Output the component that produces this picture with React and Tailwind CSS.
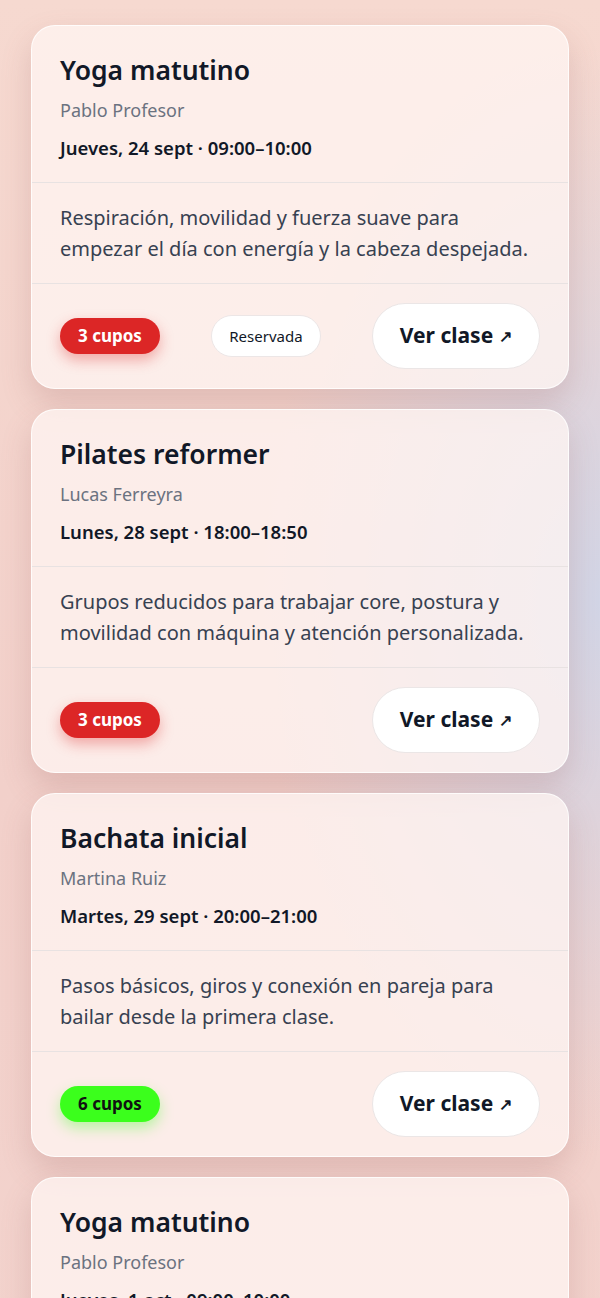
import React from "react";

const classes = [
  {
    title: "Yoga matutino",
    teacher: "Pablo Profesor",
    when: "Jueves, 24 sept · 09:00–10:00",
    desc: "Respiración, movilidad y fuerza suave para empezar el día con energía y la cabeza despejada.",
    cupos: 3,
    reserved: true,
  },
  {
    title: "Pilates reformer",
    teacher: "Lucas Ferreyra",
    when: "Lunes, 28 sept · 18:00–18:50",
    desc: "Grupos reducidos para trabajar core, postura y movilidad con máquina y atención personalizada.",
    cupos: 3,
    reserved: false,
  },
  {
    title: "Bachata inicial",
    teacher: "Martina Ruiz",
    when: "Martes, 29 sept · 20:00–21:00",
    desc: "Pasos básicos, giros y conexión en pareja para bailar desde la primera clase.",
    cupos: 6,
    reserved: false,
  },
  {
    title: "Yoga matutino",
    teacher: "Pablo Profesor",
    when: "Jueves, 1 oct · 09:00–10:00",
    desc: "Respiración, movilidad y fuerza suave para empezar el día con energía y la cabeza despejada.",
    cupos: 3,
    reserved: false,
  },
];

function Card({ c }) {
  const low = c.cupos <= 3;
  return (
    <div className="rounded-[24px] border border-white/80 bg-[#fff6f3]/75 shadow-[0_14px_30px_rgba(150,90,90,0.22)] overflow-hidden">
      <div className="px-[28px] pt-[26px] pb-[22px]">
        <h2 className="text-[26.5px] leading-[36px] font-semibold text-[#111827]">{c.title}</h2>
        <p className="mt-[10px] text-[18px] leading-[24px] text-[#6b7280]">{c.teacher}</p>
        <p className="mt-[14px] text-[18.5px] leading-[24px] font-semibold text-[#111827]">{c.when}</p>
      </div>
      <div className="border-t border-[#e8e2e2] px-[28px] py-[19px]">
        <p className="text-[20px] leading-[31px] text-[#374151]">{c.desc}</p>
      </div>
      <div className="border-t border-[#e8e2e2] px-[28px] py-[19px] flex items-center justify-between">
        <span
          className={
            low
              ? "h-[36px] px-[18px] rounded-full bg-[#dc2626] text-white text-[17px] font-bold flex items-center shadow-[0_6px_14px_rgba(220,38,38,0.35)]"
              : "h-[36px] px-[18px] rounded-full bg-[#3bff1c] text-[#111] text-[17px] font-bold flex items-center shadow-[0_6px_14px_rgba(59,255,28,0.35)]"
          }
        >
          {c.cupos} cupos
        </span>
        {c.reserved && (
          <span className="h-[42px] px-[17px] rounded-full bg-white border border-[#ece6e6] text-[15px] text-[#111827] flex items-center">
            Reservada
          </span>
        )}
        <button className="h-[66px] w-[168px] rounded-full bg-white border border-[#ebe6e6] text-[21px] font-bold text-[#111827] flex items-center justify-center gap-[6px]">
          Ver clase <span className="text-[16px] font-semibold">↗</span>
        </button>
      </div>
    </div>
  );
}

export default function App() {
  return (
    <div
      className="min-h-[1298px] w-[600px] px-[31px] pt-[25px] pb-[40px] flex flex-col gap-[20px] bg-[radial-gradient(ellipse_at_100%_38%,#d2d5e6_0%,rgba(210,213,230,0)_40%),linear-gradient(180deg,#f6d9d0_0%,#f2d0ca_50%,#f3d4ce_100%)]"
      style={{ fontFamily: '"Noto Sans", "Open Sans", sans-serif' }}
    >
      {classes.map((c, i) => (
        <Card key={i} c={c} />
      ))}
    </div>
  );
}
